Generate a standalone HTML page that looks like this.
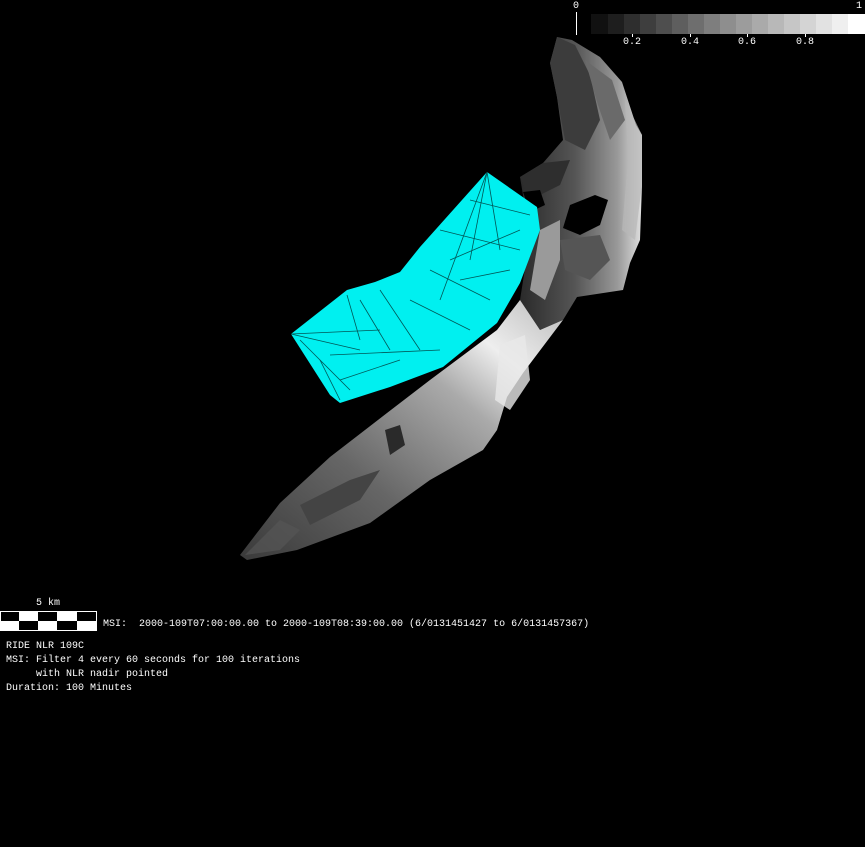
<!DOCTYPE html>
<html><head><meta charset="utf-8"><style>
html,body{margin:0;padding:0;background:#000;width:865px;height:847px;overflow:hidden}
.t{position:absolute;font-family:"Liberation Mono","DejaVu Sans Mono",monospace;font-size:10px;color:#fff;white-space:pre;line-height:14px}
</style></head><body>
<svg width="865" height="847" style="position:absolute;left:0;top:0">
<defs>
<linearGradient id="g1" x1="0" y1="0" x2="1" y2="0">
<stop offset="0" stop-color="#2a2a2a"/><stop offset="0.45" stop-color="#555"/><stop offset="0.8" stop-color="#999"/><stop offset="1" stop-color="#e0e0e0"/>
</linearGradient>
<linearGradient id="g2" x1="0" y1="1" x2="1" y2="0">
<stop offset="0" stop-color="#3a3a3a"/><stop offset="0.35" stop-color="#666"/><stop offset="0.65" stop-color="#aaa"/><stop offset="0.8" stop-color="#eee"/><stop offset="1" stop-color="#bbb"/>
</linearGradient>
<linearGradient id="g3" x1="0" y1="0" x2="0" y2="1">
<stop offset="0" stop-color="#777"/><stop offset="1" stop-color="#333"/>
</linearGradient>
</defs>
<!-- upper arm -->
<polygon fill="url(#g1)" points="557,37 572,40 600,57 622,82 636,125 642,135 642,185 640,240 630,263 623,290 577,297 563,320 540,330 520,300 530,237 520,177 543,163 563,140 557,97 550,63"/>
<!-- lower body -->
<polygon fill="url(#g2)" points="563,320 523,373 507,397 497,430 483,450 430,480 370,523 297,550 247,560 240,555 280,503 330,457 387,413 430,380 497,330 520,300 540,330"/>
<!-- shading on upper arm -->
<polygon fill="#3c3c3c" points="557,37 575,45 590,75 600,120 585,150 565,140 557,97 550,63"/>
<polygon fill="#6a6a6a" points="585,60 612,80 625,120 610,140 598,105"/>
<polygon fill="#b8b8b8" opacity="0.7" points="625,100 642,135 642,185 635,240 622,230 628,160"/>
<polygon fill="#2e2e2e" points="520,177 543,163 570,160 560,185 530,200"/>
<polygon fill="#000" points="523,192 540,190 545,205 530,212"/>
<polygon fill="#000" points="570,205 595,195 608,200 600,225 580,235 563,228"/>
<polygon fill="#555" points="560,240 600,235 610,260 590,280 565,270"/>
<polygon fill="#9a9a9a" points="540,230 560,220 560,260 545,300 530,290"/>
<!-- lower shading -->
<polygon fill="#e8e8e8" opacity="0.8" points="500,345 525,335 530,380 510,410 495,400"/>
<polygon fill="#444" points="300,505 350,480 380,470 360,500 310,525"/>
<polygon fill="#2a2a2a" points="385,430 400,425 405,445 390,455"/>
<polygon fill="#555" opacity="0.7" points="245,555 280,520 300,530 280,550"/>
<!-- cyan mesh -->
<polygon fill="#00f0f0" points="291,334 347,290 375,282 400,272 420,247 487,172 537,207 540,230 520,283 497,323 443,367 390,387 340,403 330,395"/>
<g stroke="#003030" stroke-width="0.8" opacity="0.8">
<line x1="487" y1="172" x2="470" y2="260"/><line x1="487" y1="172" x2="440" y2="300"/><line x1="487" y1="172" x2="500" y2="250"/>
<line x1="440" y1="230" x2="520" y2="250"/><line x1="450" y1="260" x2="520" y2="230"/><line x1="460" y1="280" x2="510" y2="270"/>
<line x1="291" y1="334" x2="360" y2="350"/><line x1="291" y1="334" x2="380" y2="330"/><line x1="300" y1="340" x2="350" y2="390"/>
<line x1="347" y1="295" x2="360" y2="340"/><line x1="360" y1="300" x2="390" y2="350"/><line x1="380" y1="290" x2="420" y2="350"/>
<line x1="330" y1="355" x2="440" y2="350"/><line x1="340" y1="380" x2="400" y2="360"/><line x1="410" y1="300" x2="470" y2="330"/>
<line x1="470" y1="200" x2="530" y2="215"/><line x1="430" y1="270" x2="490" y2="300"/><line x1="320" y1="360" x2="340" y2="400"/>
</g>
<!-- colorbar -->
<g>
<rect x="591" y="14" width="17" height="20" fill="#111"/><rect x="608" y="14" width="16" height="20" fill="#1e1e1e"/>
<rect x="624" y="14" width="16" height="20" fill="#2e2e2e"/><rect x="640" y="14" width="16" height="20" fill="#3e3e3e"/>
<rect x="656" y="14" width="16" height="20" fill="#4e4e4e"/><rect x="672" y="14" width="16" height="20" fill="#5e5e5e"/>
<rect x="688" y="14" width="16" height="20" fill="#6e6e6e"/><rect x="704" y="14" width="16" height="20" fill="#7e7e7e"/>
<rect x="720" y="14" width="16" height="20" fill="#8e8e8e"/><rect x="736" y="14" width="16" height="20" fill="#9c9c9c"/>
<rect x="752" y="14" width="16" height="20" fill="#aaa"/><rect x="768" y="14" width="16" height="20" fill="#b8b8b8"/>
<rect x="784" y="14" width="16" height="20" fill="#c6c6c6"/><rect x="800" y="14" width="16" height="20" fill="#d4d4d4"/>
<rect x="816" y="14" width="16" height="20" fill="#e2e2e2"/><rect x="832" y="14" width="16" height="20" fill="#efefef"/>
<rect x="848" y="14" width="17" height="20" fill="#fff"/>
</g>
<line x1="576.5" y1="12" x2="576.5" y2="35" stroke="#fff"/>
<g stroke="#fff"><line x1="632.5" y1="34" x2="632.5" y2="37"/><line x1="690.5" y1="34" x2="690.5" y2="37"/><line x1="747.5" y1="34" x2="747.5" y2="37"/><line x1="805.5" y1="34" x2="805.5" y2="37"/></g>
<!-- scale bar -->
<rect x="0" y="611" width="97" height="20" fill="#fff"/>
<g fill="#000">
<rect x="1" y="612" width="18" height="9"/><rect x="38" y="612" width="19" height="9"/><rect x="77" y="612" width="19" height="9"/>
<rect x="19" y="621" width="19" height="9"/><rect x="57" y="621" width="20" height="9"/>
</g>
</svg>
<div class="t" style="left:573px;top:0px">0</div>
<div class="t" style="left:856px;top:0px">1</div>
<div class="t" style="left:623px;top:36px">0.2</div>
<div class="t" style="left:681px;top:36px">0.4</div>
<div class="t" style="left:738px;top:36px">0.6</div>
<div class="t" style="left:796px;top:36px">0.8</div>
<div class="t" style="left:36px;top:597px">5 km</div>
<div class="t" style="left:103px;top:618px">MSI:  2000-109T07:00:00.00 to 2000-109T08:39:00.00 (6/0131451427 to 6/0131457367)</div>
<div class="t" style="left:6px;top:640px">RIDE NLR 109C
MSI: Filter 4 every 60 seconds for 100 iterations
     with NLR nadir pointed
Duration: 100 Minutes</div>
</body></html>
